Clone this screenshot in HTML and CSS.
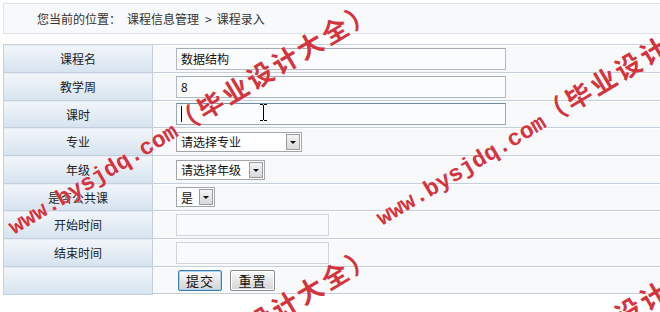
FILE: index.html
```html
<!DOCTYPE html>
<html lang="zh-CN">
<head>
<meta charset="utf-8">
<title>课程录入</title>
<link rel="stylesheet" href="styles.css">
</head>
<body>
<div class="page">
  <div class="crumb"><span class="crumb-label">您当前的位置：</span><span>课程信息管理</span><span class="crumb-sep">&gt;</span><span>课程录入</span></div>
  <table class="form">
    <tr><td class="lbl">课程名</td><td class="val"><div class="field long">数据结构</div></td></tr>
    <tr><td class="lbl">教学周</td><td class="val"><div class="field long">8</div></td></tr>
    <tr class="short"><td class="lbl">课时</td><td class="val"><div class="field long focus"><span class="caret"></span><svg class="ibeam" width="9" height="17" viewBox="0 0 9 17"><path d="M1 0.5h3M5 0.5h3M4.5 1v15M1 16.5h3M5 16.5h3" stroke="#000" stroke-width="1" fill="none"/></svg></div></td></tr>
    <tr><td class="lbl">专业</td><td class="val"><div class="select sel-major"><span class="sel-text">请选择专业</span><span class="arrow"></span></div></td></tr>
    <tr><td class="lbl">年级</td><td class="val"><div class="select sel-grade"><span class="sel-text">请选择年级</span><span class="arrow"></span></div></td></tr>
    <tr class="short"><td class="lbl">是否公共课</td><td class="val"><div class="select sel-yes"><span class="sel-text">是</span><span class="arrow"></span></div></td></tr>
    <tr><td class="lbl">开始时间</td><td class="val"><div class="field date"></div></td></tr>
    <tr><td class="lbl">结束时间</td><td class="val"><div class="field date"></div></td></tr>
    <tr class="short"><td class="lbl"></td><td class="val btns"><button class="btn primary">提交</button><button class="btn">重置</button></td></tr>
  </table>
  <div class="wm-layer">
    <div class="wm wm1">www.bysjdq.com<span class="wm-cn">（毕业设计大全）</span></div>
    <div class="wm wm2">www.bysjdq.com<span class="wm-cn">（毕业设计大全）</span></div>
    <div class="wm wm3">www.bysjdq.com<span class="wm-cn">（毕业设计大全）</span></div>
    <div class="wm wm4">www.bysjdq.com<span class="wm-cn">（毕业设计大全）</span></div>
  </div>
</div>
</body>
</html>
```
FILE: styles.css
```css
html, body {
  margin: 0;
  padding: 0;
  background: #ffffff;
  overflow: hidden;
  width: 660px;
  height: 312px;
}
.page {
  position: relative;
  width: 660px;
  height: 312px;
  overflow: hidden;
  padding: 3px 0 0 3px;
  box-sizing: border-box;
  font-family: "Noto Sans CJK SC", "Liberation Sans", sans-serif;
  font-size: 12px;
  color: #222;
}
.crumb {
  width: 690px;
  height: 29px;
  border: 1px solid #dde3ea;
  background: #f7f9fb;
  display: flex;
  align-items: center;
  padding-left: 33px;
  color: #333;
}
.crumb-label {
  margin-right: 6px;
}
.crumb-sep {
  margin: 0 5px 0 6px;
}
.form {
  margin-top: 10px;
  border-collapse: collapse;
  width: 697px;
  border-top: 1px solid #c5d2de;
  border-left: 1px solid #c5d2de;
}
.form td {
  height: 27px;
  padding: 0;
  border-bottom: 1px solid #c3d0dc;
}
.form tr.short td {
  height: 26px;
}
.lbl {
  width: 148px;
  text-align: center;
  background: linear-gradient(#f2f6fa, #d6e3ef);
  border-right: 1px solid #c3cfdb;
  color: #222;
}
.val {
  background: #f7f9fb;
  padding-left: 23px !important;
  box-shadow: inset 0 1px 0 #ffffff;
}
.field {
  position: relative;
  box-sizing: border-box;
  height: 22px;
  border: 1px solid #b1b9c2;
  border-top-color: #a3abb5;
  background: #fbfcfd;
  padding-left: 4px;
  display: flex;
  align-items: center;
  color: #111;
}
.field.long {
  width: 330px;
}
.field.date {
  width: 153px;
  border-color: #cfd5dc;
  background: #f9fafb;
}
.field.focus {
  border-color: #9aaab9;
  border-top-color: #6f8ca6;
}
.caret {
  width: 1px;
  height: 16px;
  background: #000;
}
.ibeam {
  position: absolute;
  left: 82px;
  top: 0px;
}
.select {
  box-sizing: border-box;
  height: 20px;
  border: 1px solid #a2a7ad;
  background: #ffffff;
  display: flex;
  align-items: center;
  justify-content: space-between;
  padding: 1px 1px 1px 4px;
  color: #111;
}
.sel-major { width: 126px; }
.sel-grade { width: 89px; }
.sel-yes { width: 39px; }
.arrow {
  position: relative;
  box-sizing: border-box;
  width: 14px;
  height: 16px;
  border: 1px solid #9c9c9c;
  background: linear-gradient(#f4f4f4, #d9d9d9);
}
.arrow::after {
  content: "";
  position: absolute;
  left: 3px;
  top: 6px;
  border-left: 3px solid transparent;
  border-right: 3px solid transparent;
  border-top: 3px solid #111;
}
.btns {
  display: flex;
  align-items: center;
  gap: 8px;
  padding-left: 25px !important;
  height: 26px;
}
.btn {
  box-sizing: border-box;
  height: 21px;
  width: 45px;
  margin: 0;
  padding: 0;
  font-family: "Noto Sans CJK SC", sans-serif;
  font-size: 13px;
  letter-spacing: 1px;
  color: #111;
  border: 1px solid #8b8b8b;
  border-radius: 2px;
  background: linear-gradient(#fbfbfb, #e2e2e2 60%, #d4d4d4);
  box-shadow: inset 0 0 0 1px #ffffff;
}
.btn.primary {
  width: 44px;
  border-color: #3d7fb3;
  box-shadow: inset 0 0 0 1px #a9d2ee;
}
.wm-layer {
  position: absolute;
  left: 0;
  top: 0;
  width: 660px;
  height: 312px;
  overflow: hidden;
  pointer-events: none;
}
.wm {
  position: absolute;
  white-space: nowrap;
  font-family: "Liberation Mono", "Noto Sans CJK SC", monospace;
  font-weight: bold;
  font-size: 23px;
  line-height: 24px;
  color: #d3343d;
  transform-origin: 0 100%;
  transform: rotate(-31deg);
  text-shadow: 0 0 1px #ffffff;
}
.wm-cn {
  font-family: "Noto Sans CJK SC", sans-serif;
  font-size: 26px;
  letter-spacing: 3px;
}
.wm1 { left: 17px; top: 211px; }
.wm2 { left: 385px; top: 202px; }
.wm3 { left: 17px; top: 456px; }
.wm4 { left: 385px; top: 447px; }
```
